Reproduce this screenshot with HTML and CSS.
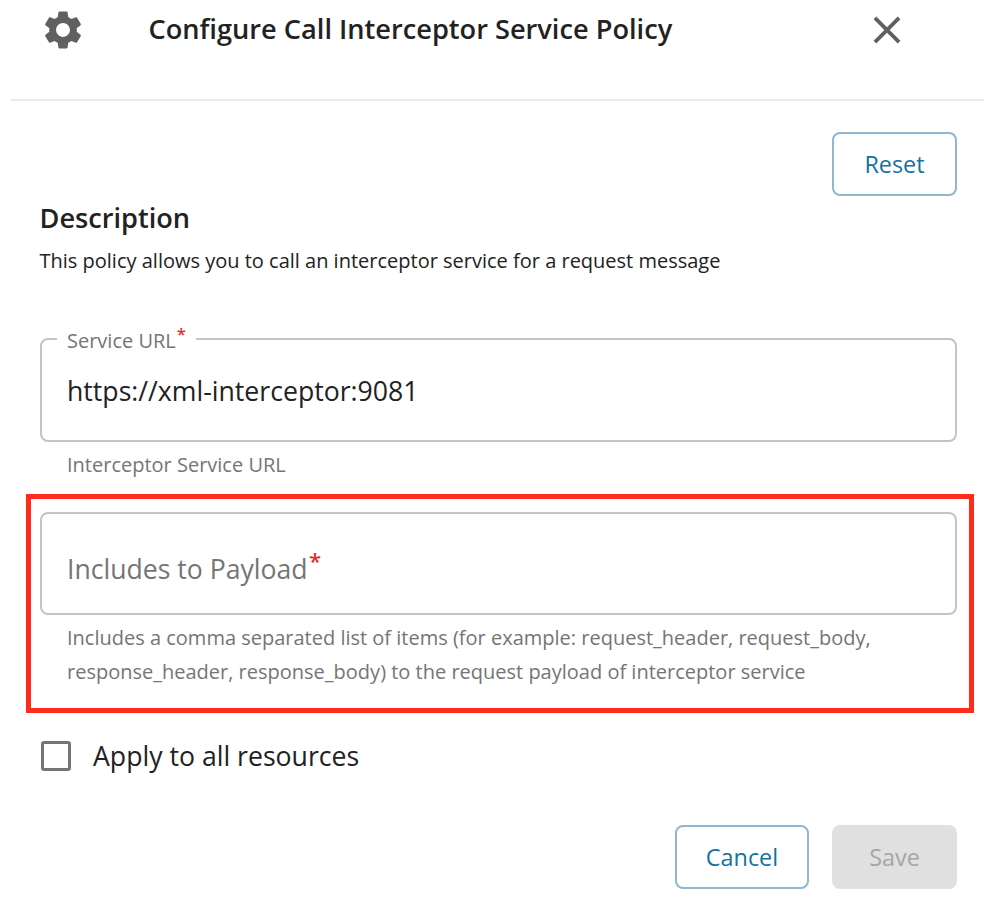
FILE: index.html
```html
<!DOCTYPE html>
<html lang="en">
<head>
<meta charset="utf-8">
<title>Configure Policy</title>
<link rel="stylesheet" href="styles.css">
</head>
<body>
<main class="dialog">
  <header class="header">
    <svg class="gear" viewBox="0 0 24 24" aria-hidden="true"><path d="M19.14 12.94c.04-.3.06-.61.06-.94 0-.32-.02-.64-.07-.94l2.03-1.58c.18-.14.23-.41.12-.61l-1.92-3.32c-.12-.22-.37-.29-.59-.22l-2.39.96c-.5-.38-1.03-.7-1.62-.94l-.36-2.54c-.04-.24-.24-.41-.48-.41h-3.84c-.24 0-.43.17-.47.41l-.36 2.54c-.59.24-1.13.57-1.62.94l-2.39-.96c-.22-.08-.47 0-.59.22L2.74 8.87c-.12.21-.08.47.12.61l2.03 1.58c-.05.3-.09.63-.09.94s.02.64.07.94l-2.03 1.58c-.18.14-.23.41-.12.61l1.92 3.32c.12.22.37.29.59.22l2.39-.96c.5.38 1.03.7 1.62.94l.36 2.54c.05.24.24.41.48.41h3.84c.24 0 .44-.17.47-.41l.36-2.54c.59-.24 1.13-.56 1.62-.94l2.39.96c.22.08.47 0 .59-.22l1.92-3.32c.12-.22.07-.47-.12-.61l-2.01-1.58zM12 15.6c-1.98 0-3.6-1.62-3.6-3.6s1.62-3.6 3.6-3.6 3.6 1.62 3.6 3.6-1.62 3.6-3.6 3.6z"/></svg>
    <h1 class="title">Configure Call Interceptor Service Policy</h1>
    <svg class="close" viewBox="0 0 24 24" aria-hidden="true"><path d="M19 6.41 17.59 5 12 10.59 6.41 5 5 6.41 10.59 12 5 17.59 6.41 19 12 13.41 17.59 19 19 17.59 13.41 12z"/></svg>
  </header>
  <div class="toolbar"><button class="btn btn-reset">Reset</button></div>
  <section class="about">
    <h2 class="about-title">Description</h2>
    <p class="about-text">This policy allows you to call an interceptor service for a request message</p>
  </section>
  <div class="group">
    <fieldset class="field field-filled">
      <legend class="legend">Service URL<sup>*</sup></legend>
      <div class="value">https://xml-interceptor:9081</div>
    </fieldset>
    <p class="helper">Interceptor Service URL</p>
  </div>
  <div class="highlight">
    <div class="field field-empty">Includes to Payload<sup>*</sup></div>
    <p class="helper">Includes a comma separated list of items (for example: request_header, request_body,<br>response_header, response_body) to the request payload of interceptor service</p>
  </div>
  <label class="check"><span class="box"></span>Apply to all resources</label>
  <footer class="actions">
    <button class="btn btn-cancel">Cancel</button>
    <button class="btn btn-save" disabled>Save</button>
  </footer>
</main>
</body>
</html>
```
FILE: styles.css
```css
* { box-sizing: border-box; }

body {
  margin: 0;
  background: #fff;
  color: #222;
  font-family: "Open Sans", sans-serif;
}

h1, h2, p { margin: 0; }

.dialog { width: 984px; height: 904px; overflow: hidden; }

.header {
  display: flex;
  align-items: flex-start;
  height: 101px;
  margin-left: 11px;
  padding-left: 29px;
  border-bottom: 2px solid #ebebeb;
}

.gear { flex: none; width: 46px; height: 46px; margin-top: 6.5px; fill: #606060; }
.title { flex: none; width: 778px; padding-left: 62.5px; font-size: 27.2px; font-weight: 600; line-height: 58px; white-space: nowrap; }
.close { flex: none; width: 46px; height: 46px; margin-top: 6.5px; fill: #606060; }

.toolbar { display: flex; justify-content: flex-end; padding: 31px 27px 0 0; }

.btn {
  height: 65px;
  padding: 0;
  border: 2px solid #8fb8d0;
  border-radius: 8px;
  background: #fff;
  color: #15719f;
  font: 23.4px/60px "Open Sans", sans-serif;
}

.btn-reset, .btn-save { width: 125px; }
.btn-cancel { width: 134px; }
.btn-reset { height: 64px; }
.btn-cancel, .btn-save { height: 64px; }
.btn-save { border-color: #e0e0e0; background: #e0e0e0; color: #a6a6a6; }

.about { height: 129px; padding: 1px 0 0 39.5px; }
.about-title { font-size: 27.15px; font-weight: 600; line-height: 42px; }
.about-text { padding-top: 1px; font-size: 20px; line-height: 42px; }

.field { border: 2px solid #c4c4c4; border-radius: 8px; }
.field-filled { width: 917px; height: 117px; margin: 0 0 0 40px; padding: 0 0 0 25px; }
.legend { height: 28px; margin-left: -10px; padding: 0 10px; color: #757575; font-size: 20px; line-height: 31px; }
sup { margin-left: 1.5px; color: #db3131; font-weight: 600; line-height: 0; }
.legend sup { margin-left: 1px; }
.value { font-size: 26.65px; line-height: 76px; }
.helper { color: #757575; font-size: 20px; line-height: 34px; }
.group { height: 169px; }
.group .helper { padding: 6px 0 0 67px; }

.highlight { width: 948px; height: 219px; margin-left: 26px; padding: 13px 0 0 9px; border: 5px solid #ff2b1c; }
.field-empty { width: 917px; height: 103px; padding-left: 25px; color: #757575; font-size: 26.6px; line-height: 110px; }
.highlight .helper { padding: 6px 0 0 27px; }

.check { display: flex; align-items: center; height: 86px; padding-left: 40px; font-size: 26.65px; }
.box { width: 30px; height: 30px; margin: 0 22px 0 1px; border: 3px solid #757575; border-radius: 3px; }
.actions { display: flex; justify-content: flex-end; gap: 23px; padding: 26px 27px 0 0; }
```
